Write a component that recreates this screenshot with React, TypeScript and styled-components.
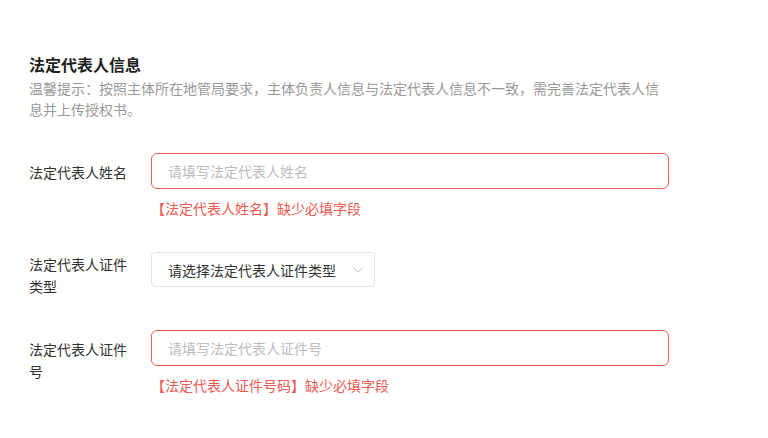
import React from "react";
import styled, { createGlobalStyle } from "styled-components";

const GlobalStyle = createGlobalStyle`
  html, body {
    margin: 0;
    padding: 0;
    background: #ffffff;
  }
  body {
    font-family: "Noto Sans CJK SC", "Noto Sans", "Liberation Sans", sans-serif;
    -webkit-font-smoothing: antialiased;
  }
  * { box-sizing: border-box; }
`;

const Page = styled.div`
  padding: 52px 0 40px 29px;
`;

const Section = styled.section`
  width: 640px;
`;

const Title = styled.h2`
  margin: 0;
  font-size: 16px;
  line-height: 24px;
  font-weight: 600;
  color: #1f1f1f;
`;

const Hint = styled.p`
  margin: 2px 0 0;
  font-size: 14px;
  line-height: 21px;
  color: #999999;
`;

const Form = styled.div`
  margin-top: 33px;
  display: flex;
  flex-direction: column;
  gap: 33px;
`;

const Item = styled.div`
  display: flex;
  align-items: flex-start;
`;

const Label = styled.div<{ $offset: number }>`
  width: 110px;
  margin-right: 12px;
  padding-top: ${(p) => p.$offset}px;
  font-size: 14px;
  line-height: 22px;
  color: #333333;
`;

const Control = styled.div`
  flex: 1;
  min-width: 0;
`;

const TextInput = styled.input`
  display: block;
  width: 100%;
  height: 36px;
  padding: 0 16px;
  border: 1px solid #ee5a50;
  border-radius: 6px;
  outline: none;
  font-family: inherit;
  font-size: 14px;
  color: #333333;
  background: #ffffff;
  &::placeholder {
    color: #bdbdbd;
  }
`;

const ErrorText = styled.div`
  margin-top: 8px;
  font-size: 14px;
  line-height: 22px;
  color: #ec5a50;
`;

const SelectBox = styled.div`
  width: 224px;
  height: 35px;
  display: flex;
  align-items: center;
  justify-content: space-between;
  padding: 0 10px 0 16px;
  border: 1px solid #e3e3e3;
  border-radius: 4px;
  font-size: 14px;
  color: #333333;
  background: #ffffff;
`;

const Chevron = styled.svg`
  display: block;
  flex-shrink: 0;
`;

export default function App() {
  return (
    <>
      <GlobalStyle />
      <Page>
        <Section>
          <Title>法定代表人信息</Title>
          <Hint>
            温馨提示：按照主体所在地管局要求，主体负责人信息与法定代表人信息不一致，需完善法定代表人信息并上传授权书。
          </Hint>
          <Form>
            <Item>
              <Label $offset={8}>法定代表人姓名</Label>
              <Control>
                <TextInput placeholder="请填写法定代表人姓名" />
                <ErrorText>【法定代表人姓名】缺少必填字段</ErrorText>
              </Control>
            </Item>
            <Item>
              <Label $offset={1}>法定代表人证件类型</Label>
              <Control>
                <SelectBox>
                  <span>请选择法定代表人证件类型</span>
                  <Chevron width="12" height="8" viewBox="0 0 12 8">
                    <polyline
                      points="1,1.5 6,6 11,1.5"
                      fill="none"
                      stroke="#c4c4c4"
                      strokeWidth="1"
                    />
                  </Chevron>
                </SelectBox>
              </Control>
            </Item>
            <Item>
              <Label $offset={8}>法定代表人证件号</Label>
              <Control>
                <TextInput placeholder="请填写法定代表人证件号" />
                <ErrorText>【法定代表人证件号码】缺少必填字段</ErrorText>
              </Control>
            </Item>
          </Form>
        </Section>
      </Page>
    </>
  );
}
